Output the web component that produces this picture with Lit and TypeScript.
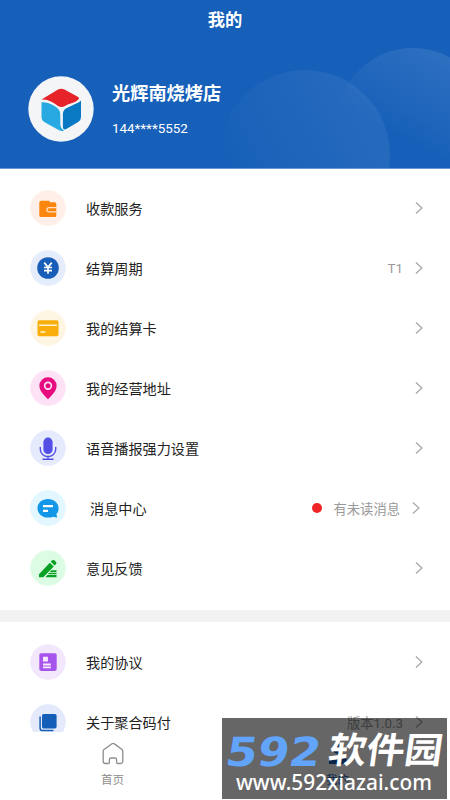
import { LitElement, html, css, svg, nothing, TemplateResult } from "lit";
import { customElement } from "lit/decorators.js";
import { classMap } from "lit/directives/class-map.js";

interface Row {
  label: string;
  icon: string;
  tint: string;
  note?: string;
  unread?: boolean;
}

const services: Row[] = [
  { label: "收款服务", icon: "wallet", tint: "#ffefe8" },
  { label: "结算周期", icon: "yen", tint: "#e5ecfb", note: "T1" },
  { label: "我的结算卡", icon: "card", tint: "#fff5e3" },
  { label: "我的经营地址", icon: "pin", tint: "#fde2f5" },
  { label: "语音播报强力设置", icon: "mic", tint: "#e6eafd" },
  { label: "消息中心", icon: "chat", tint: "#e2f7ff", note: "有未读消息", unread: true },
  { label: "意见反馈", icon: "pencil", tint: "#dcfde4" },
];

const about: Row[] = [
  { label: "我的协议", icon: "doc", tint: "#f2e7fd" },
  { label: "关于聚合码付", icon: "layers", tint: "#e4eafb", note: "版本1.0.3" },
];

/* Glyphs share a 36-unit box, the size of the tinted disc. */
const glyphs: Record<string, TemplateResult> = {
  wallet: svg`<path fill="#fb860d" d="M9.300 12.800q0-2 2-2h7.200q1 0 1.500 1.400h4.500q1.800 0 1.800 1.800v11.500q0 1.500-1.500 1.500h-14q-1.500 0-1.500-1.500z"/><path d="M27 17.600h-8a2.100 2.100 0 0 0 0 4.200h8" fill="none" stroke="#ffe3c4" stroke-width="1.200"/>`,
  yen: svg`<circle cx="18" cy="18" r="10.800" fill="#185eb9"/><path d="M14.300 12.600l3.700 4.700 3.700-4.700M14 17.500h8M14 20.600h8M18 17v6.800" fill="none" stroke="#fff" stroke-width="1.700"/>`,
  card: svg`<rect x="7.500" y="10.200" width="21" height="16" rx="1.800" fill="#f9ae0b"/><path d="M9 15.300h18M10.500 22h4.800" stroke="#fff3ce" stroke-width="1.400"/>`,
  pin: svg`<path fill="#e60c80" fill-rule="evenodd" d="M18 7.300a8.500 8.500 0 0 1 8.600 8.500c0 5.200-4.500 9.200-8.600 13.500-4.100-4.300-8.600-8.300-8.600-13.500a8.500 8.500 0 0 1 8.600-8.500zm0 4.300a4.200 4.200 0 1 0 0 8.400 4.200 4.200 0 0 0 0-8.400z"/><circle cx="18" cy="15.800" r="2.500" fill="#e60c80"/>`,
  mic: svg`<rect x="13.400" y="7.600" width="9.200" height="16.400" rx="4.600" fill="#514fe5"/><path d="M10.300 17v2.500a7.700 7 0 0 0 15.400 0V17M18 26.500v2.800M12.500 29.300h11" fill="none" stroke="#514fe5" stroke-width="1.400"/>`,
  chat: svg`<path fill="#1296e8" d="M18 8.900c5.800 0 10.600 4 10.600 9.300 0 2.500-1 4.500-2.300 6.100l.8 2.400q.2.900-.8.700l-3-.7q-2.300.9-5.300.9c-5.800 0-10.500-4-10.500-9.400S12.200 8.900 18 8.900z"/><path d="M13 16.100h10M13 20.800h5" stroke="#fff" stroke-width="2.200"/>`,
  pencil: svg`<path fill="#08a123" d="M9 24.300l10.800-11.600 4 3.700-10.500 10.800H9zM20.700 11.800l1.500-1.500q1-.9 2 0l1.900 1.800q.9 1 0 1.900l-1.500 1.500zM20.200 21.500l1.200-1.200h5.100v1.700h-6.300zM17.800 24.300l1.300-1.500h7.400v1.500zM15.500 27.200l1.900-2.100h9.100v2.100z"/>`,
  doc: svg`<rect x="9.300" y="9.200" width="17.400" height="17.700" rx="1.800" fill="#a554ec"/><path fill="#fbeaff" d="M13 12.700h4.900v4.700H13zM13 19.600h7.800v1.800H13zM13 22.600h7.800v1.700H13z"/>`,
  layers: svg`<rect x="12" y="10" width="14.600" height="14.400" rx="1.600" fill="#155eb8"/><path d="M10.100 12.500v11.400q0 2.600 2.600 2.600h10.700" fill="none" stroke="#155eb8" stroke-width="1.500"/>`,
};

@customElement("menu-row")
class MenuRow extends LitElement {
  static properties = { row: { attribute: false } };
  declare row: Row;

  static styles = css`
    :host { display: flex; align-items: center; height: 60px; padding: 0 27px 0 30px; }
    .disc { width: 36px; height: 36px; flex: none; }
    .label { margin-left: 20px; font-size: 14.15px; color: #222; flex: 1; white-space: nowrap; }
    .inset { margin-left: 24px; }
    .note { font-size: 13.3px; color: #999; margin-right: 12px; white-space: nowrap; }
    .dot { width: 10px; height: 10px; border-radius: 50%; background: #ef2426; margin-right: 12px; }
    .arrow { width: 8px; height: 14px; flex: none; }
    .shifted { margin-right: 3px; }
  `;

  render() {
    const { label, icon, tint, note, unread } = this.row;
    return html`
      <svg class="disc" viewBox="0 0 36 36"><circle cx="18" cy="18" r="17.800" fill=${tint}></circle>${glyphs[icon]}</svg>
      <span class=${classMap({ label: true, inset: !!unread })}>${label}</span>
      ${unread ? html`<i class="dot"></i>` : nothing}
      ${note ? html`<span class="note">${note}</span>` : nothing}
      <svg class=${classMap({ arrow: true, shifted: !!unread })} viewBox="0 0 8 14"><path d="M.9 1.400L6.900 7 .9 12.600" fill="none" stroke="#a9a9a9" stroke-width="1.300"/></svg>
    `;
  }
}

@customElement("app-root")
class AppRoot extends LitElement {
  static styles = css`
    :host {
      display: flex; flex-direction: column; position: relative; height: 800px; overflow: hidden;
      background: #fff; font-family: Roboto, "Noto Sans CJK SC", sans-serif;
    }
    .header { height: 169px; flex: none; position: relative; background: #1760b9; color: #fff; border-bottom: 1px solid #6796ce; box-sizing: border-box; }
    .waves { position: absolute; inset: 0; width: 450px; height: 168px; }
    .title { position: relative; text-align: center; font-size: 17.3px; font-weight: 700; line-height: 40px; height: 38px; }
    .profile { position: relative; display: flex; align-items: center; padding: 38px 0 0 28px; gap: 18px; }
    .avatar { width: 66px; height: 66px; }
    .who { display: flex; flex-direction: column; gap: 14px; padding-top: 2px; }
    .name { font-size: 18.200px; line-height: 24px; font-weight: 700; }
    .phone { font-size: 13.400px; line-height: 18px; }
    .body { flex: 1; min-height: 0; overflow: hidden; }
    .group { padding: 10px 0 12px; }
    .first { padding-top: 9px; }
    .gap { height: 12px; background: #f2f2f2; }
    .tabs { height: 68px; flex: none; display: flex; background: #fff; }
    .tab { flex: 1; display: flex; flex-direction: column; align-items: center; padding-top: 10px; font-size: 11.600px; line-height: 18px; gap: 5px; color: #8d8d8d; box-sizing: border-box; }
    .active { color: #1760b9; }
    .tab-icon { width: 24px; height: 24px; }
    .mark { position: absolute; left: 222px; top: 718px; width: 225px; height: 81px; background: rgba(0, 0, 0, 0.6); }
    .mark-art { display: block; width: 225px; height: 81px; }
    .digits { font: bold 40px "DejaVu Sans", sans-serif; fill: #62a4fa; }
    .brand { font: 700 36px "Noto Sans CJK SC", sans-serif; fill: #fff; }
    .site { font: 500 22px "Noto Sans", sans-serif; fill: #fff; }
  `;

  render() {
    return html`
      <header class="header">
        <svg class="waves" viewBox="0 0 450 168">
          <defs>
            <linearGradient id="a" x1=".8" y1=".2" x2=".05" y2=".6"><stop stop-color="#fff" stop-opacity=".06"/><stop offset="1" stop-color="#fff" stop-opacity="0"/></linearGradient>
            <linearGradient id="b" x1=".65" y1="0" x2=".35" y2=".55"><stop stop-color="#fff" stop-opacity=".1"/><stop offset="1" stop-color="#fff" stop-opacity="0"/></linearGradient>
          </defs>
          <circle cx="305" cy="155" r="85" fill="url(#a)"/>
          <circle cx="413" cy="124" r="76" fill="url(#b)"/>
        </svg>
        <div class="title">我的</div>
        <div class="profile">
          <svg class="avatar" viewBox="0 0 66 66">
            <circle cx="33" cy="33" r="32.700" fill="#f4f5f7"/>
            <path fill="#e52329" d="M13.500 23.600L30 13.600q3.200-1.700 6.500 0l13.700 7.300q1.600 1 .2 2.500C46.500 27 41.500 27 37 30q-3.500 2.200-7 0C25 26.500 20 23 13.500 23.600z"/>
            <path fill="#28a9e2" d="M13.500 26.300q5.500-.8 11.800 3C31 32.700 32.300 34.800 32.300 39.500v8c0 3 1 5 3.700 7.300q-2.700.6-5.400-.9l-14.300-8q-2.800-1.700-2.800-4.700z"/>
            <path fill="#0879c2" d="M53 24.500v16.700q0 3-2.800 4.700l-11.900 7.200q-3.400 1.600-3.400-2.800V38q0-3.700 3.400-5.700l8.800-4.300q4-1.400 5.900-3.500z"/>
          </svg>
          <div class="who">
            <div class="name">光辉南烧烤店</div>
            <div class="phone">144****5552</div>
          </div>
        </div>
      </header>
      <main class="body">
        <section class="group first">${services.map((r) => html`<menu-row .row=${r}></menu-row>`)}</section>
        <div class="gap"></div>
        <section class="group">${about.map((r) => html`<menu-row .row=${r}></menu-row>`)}</section>
      </main>
      <nav class="tabs">
        <div class="tab">
          <svg class="tab-icon" viewBox="0 0 24 24"><path d="M2.200 9.200Q2.200 8.200 3 7.500l7.600-5.600q1.400-1 2.800 0L21 7.500q.8.700.8 1.700v10q0 2.300-2.300 2.300h-2.700q-1.200 0-1.200-1.200v-2.500q0-1.800-1.800-1.800h-3.600q-1.800 0-1.800 1.800v2.500q0 1.200-1.200 1.200H4.500q-2.300 0-2.300-2.300z" fill="none" stroke="#8d8d8d" stroke-width="1.300"/></svg>
          <span>首页</span>
        </div>
        <div class="tab active">
          <svg class="tab-icon" viewBox="0 0 24 24"><circle cx="12" cy="7" r="5" fill="#1760b9"/><path d="M3 22v-2.500q0-5.500 5.500-5.500h7q5.500 0 5.500 5.500V22z" fill="#1760b9"/></svg>
          <span>我的</span>
        </div>
      </nav>
      <aside class="mark">
        <svg class="mark-art" viewBox="0 0 225 81">
          <text class="digits" transform="translate(2 47.500) skewX(-9)" textLength="95" lengthAdjust="spacingAndGlyphs">592</text>
          <text class="brand" transform="translate(105 45) skewX(-8)" textLength="114" lengthAdjust="spacingAndGlyphs">软件园</text>
          <text class="site" x="14" y="72" textLength="196" lengthAdjust="spacingAndGlyphs">www.592xiazai.com</text>
        </svg>
      </aside>
    `;
  }
}
